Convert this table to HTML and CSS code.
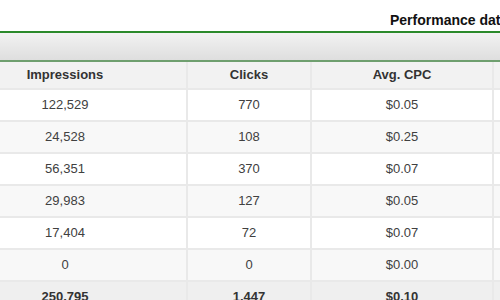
FILE: index.html
```html
<!DOCTYPE html>
<html>
<head>
<meta charset="utf-8">
<link rel="stylesheet" href="styles.css">
</head>
<body>
<div class="report">
  <div class="title">Performance data</div>
  <div class="band"></div>
  <div class="grid">
    <div class="row head">
      <div class="cell">Impressions</div>
      <div class="cell">Clicks</div>
      <div class="cell">Avg. CPC</div>
      <div class="cell"></div>
    </div>
    <div class="row">
      <div class="cell">122,529</div><div class="cell">770</div><div class="cell">$0.05</div><div class="cell"></div>
    </div>
    <div class="row alt">
      <div class="cell">24,528</div><div class="cell">108</div><div class="cell">$0.25</div><div class="cell"></div>
    </div>
    <div class="row">
      <div class="cell">56,351</div><div class="cell">370</div><div class="cell">$0.07</div><div class="cell"></div>
    </div>
    <div class="row alt">
      <div class="cell">29,983</div><div class="cell">127</div><div class="cell">$0.05</div><div class="cell"></div>
    </div>
    <div class="row">
      <div class="cell">17,404</div><div class="cell">72</div><div class="cell">$0.07</div><div class="cell"></div>
    </div>
    <div class="row alt">
      <div class="cell">0</div><div class="cell">0</div><div class="cell">$0.00</div><div class="cell"></div>
    </div>
    <div class="row total">
      <div class="cell">250,795</div><div class="cell">1,447</div><div class="cell">$0.10</div><div class="cell"></div>
    </div>
  </div>
</div>
</body>
</html>
```

FILE: styles.css
```css
html, body {
  margin: 0;
  padding: 0;
  background: #ffffff;
  overflow: hidden;
}
body {
  width: 500px;
  height: 300px;
  font-family: "Liberation Sans", Arial, sans-serif;
  font-size: 13px;
  color: #404040;
}
.report {
  margin-left: -56px;
  width: 800px;
}
.title {
  height: 31px;
  box-sizing: border-box;
  padding-left: 446px;
  padding-top: 12px;
  font-size: 14px;
  font-weight: bold;
  color: #111111;
  line-height: 16px;
  white-space: nowrap;
}
.band {
  height: 27px;
  border-top: 2px solid #2b8a2b;
  border-bottom: 2px solid #6f9f6f;
  background: linear-gradient(#f2f2f2, #dedede);
}
.grid {
  display: grid;
  row-gap: 2px;
  background: #e9e9e9;
}
.row {
  display: grid;
  grid-template-columns: 242px 122px 180px 1fr;
  column-gap: 2px;
  height: 30px;
}
.cell {
  background: #ffffff;
  text-align: center;
  line-height: 30px;
  white-space: nowrap;
}
.row.alt .cell {
  background: #f8f8f8;
}
.row.head {
  height: 26px;
}
.row.head .cell {
  background: #f2f2f2;
  line-height: 26px;
  font-weight: bold;
  color: #333333;
}
.row.total .cell {
  background: #efefef;
  font-weight: bold;
  color: #333333;
}
```
